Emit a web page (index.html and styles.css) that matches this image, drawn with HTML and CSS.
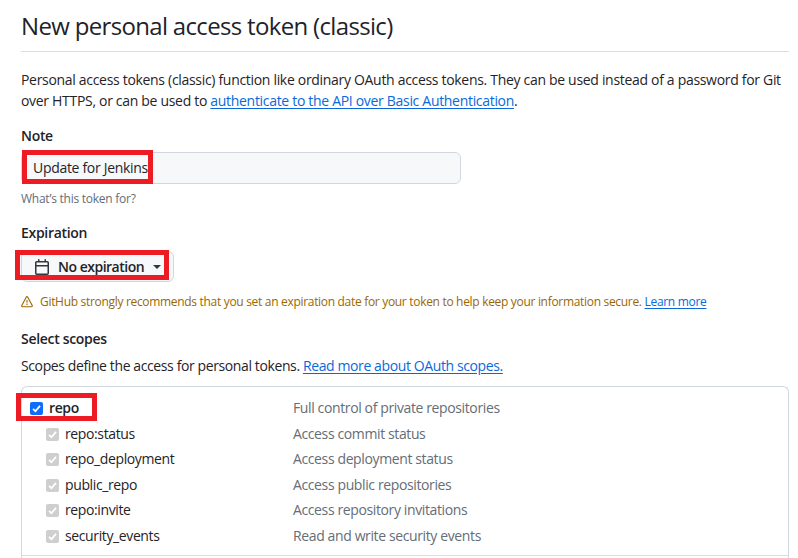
FILE: index.html
```html
<!DOCTYPE html>
<html lang="en">
<head>
<meta charset="utf-8">
<title>New personal access token (classic)</title>
<link rel="stylesheet" href="styles.css">
</head>
<body>
<main class="page">
  <header class="head"><h1>New personal access token (classic)</h1></header>
  <p class="intro">Personal access tokens (classic) function like ordinary OAuth access tokens. They can be used instead of a password for Git over HTTPS, or can be used to <a href="#">authenticate to the API over Basic Authentication</a>.</p>

  <section class="field note-field">
    <div class="label">Note</div>
    <div class="input-wrap">
      <div class="input">Update for Jenkins</div>
      <span class="mark mark-note"></span>
    </div>
    <div class="hint">What’s this token for?</div>
  </section>

  <section class="field exp-field">
    <div class="label">Expiration</div>
    <div class="button-wrap">
      <div class="select">
        <svg class="cal" viewBox="0 0 16 16" width="16" height="16"><path d="M4.75 0a.75.75 0 0 1 .75.75V2h5V.75a.75.75 0 0 1 1.5 0V2h1.25c.966 0 1.75.784 1.75 1.75v10.5A1.75 1.75 0 0 1 13.25 16H2.75A1.75 1.75 0 0 1 1 14.25V3.75C1 2.784 1.784 2 2.75 2H4V.75A.75.75 0 0 1 4.75 0ZM2.5 7.5v6.75c0 .138.112.25.25.25h10.5a.25.25 0 0 0 .25-.25V7.5Zm10.75-4H2.75a.25.25 0 0 0-.25.25V6h11V3.75a.25.25 0 0 0-.25-.25Z"/></svg>
        <span class="select-text">No expiration</span>
        <span class="caret"></span>
      </div>
      <span class="mark mark-exp"></span>
    </div>
    <div class="warn">
      <svg viewBox="0 0 16 16" width="12" height="12"><path d="M6.457 1.047c.659-1.234 2.427-1.234 3.086 0l6.082 11.378A1.75 1.75 0 0 1 14.082 15H1.918a1.75 1.75 0 0 1-1.543-2.575Zm1.763.707a.25.25 0 0 0-.44 0L1.698 13.132a.25.25 0 0 0 .22.368h12.164a.25.25 0 0 0 .22-.368Zm.53 3.996v2.5a.75.75 0 0 1-1.5 0v-2.5a.75.75 0 0 1 1.5 0ZM9 11a1 1 0 1 1-2 0 1 1 0 0 1 2 0Z"/></svg>
      <span>GitHub strongly recommends that you set an expiration date for your token to help keep your information secure. <a href="#">Learn more</a></span>
    </div>
  </section>

  <section class="field scopes">
    <div class="label">Select scopes</div>
    <p class="scope-intro">Scopes define the access for personal tokens. <a href="#">Read more about OAuth scopes.</a></p>
    <div class="table">
      <div class="row parent">
        <span class="check on"><svg viewBox="0 0 12 12" width="11" height="11"><path d="M2.2 6.4 4.8 9 9.8 3.2"/></svg></span>
        <span class="name">repo</span>
        <span class="desc">Full control of private repositories</span>
        <span class="mark mark-repo"></span>
      </div>
      <div class="row child"><span class="check off"><svg viewBox="0 0 12 12" width="11" height="11"><path d="M2.2 6.4 4.8 9 9.8 3.2"/></svg></span><span class="name">repo:status</span><span class="desc">Access commit status</span></div>
      <div class="row child"><span class="check off"><svg viewBox="0 0 12 12" width="11" height="11"><path d="M2.2 6.4 4.8 9 9.8 3.2"/></svg></span><span class="name">repo_deployment</span><span class="desc">Access deployment status</span></div>
      <div class="row child"><span class="check off"><svg viewBox="0 0 12 12" width="11" height="11"><path d="M2.2 6.4 4.8 9 9.8 3.2"/></svg></span><span class="name">public_repo</span><span class="desc">Access public repositories</span></div>
      <div class="row child"><span class="check off"><svg viewBox="0 0 12 12" width="11" height="11"><path d="M2.2 6.4 4.8 9 9.8 3.2"/></svg></span><span class="name">repo:invite</span><span class="desc">Access repository invitations</span></div>
      <div class="row child"><span class="check off"><svg viewBox="0 0 12 12" width="11" height="11"><path d="M2.2 6.4 4.8 9 9.8 3.2"/></svg></span><span class="name">security_events</span><span class="desc">Read and write security events</span></div>
      <div class="divider"></div>
    </div>
  </section>
</main>
</body>
</html>
```
FILE: styles.css
```css
* { box-sizing: border-box; }
html, body { height: 100%; overflow: hidden; }
body {
  margin: 0;
  background: #fff;
  color: #1f2328;
  font-family: "Open Sans", "Noto Sans", "Liberation Sans", sans-serif;
  font-size: 14px;
  letter-spacing: -0.31px;
}
a { color: #0969da; text-decoration: underline; text-underline-offset: 2px; }
.page { width: 768px; margin-left: 21px; }
.head { height: 52px; border-bottom: 1px solid #d8dee4; padding-top: 8px; }
h1 { margin: 0; font-size: 24px; font-weight: 400; line-height: 36px; letter-spacing: -0.67px; }
.intro { margin: 17px 0 0; line-height: 21px; }
.field { position: relative; }
.note-field { margin-top: 14px; }
.label { font-weight: 600; line-height: 21px; }
.input-wrap { position: relative; margin-top: 6px; width: 440px; }
.input {
  height: 32px; padding: 0 12px 2px 11px;
  display: flex; align-items: center;
  background: #f6f8fa;
  border: 1px solid #d0d7de;
  border-radius: 6px;
}
.hint { margin-top: 6px; font-size: 12px; line-height: 18px; color: #656d76; letter-spacing: -0.25px; }
.exp-field { margin-top: 14px; }
.button-wrap { position: relative; margin-top: 8px; width: 153px; }
.select {
  height: 31px; padding-left: 12px;
  display: flex; align-items: center;
  background: #f6f8fa;
  border: 1px solid #d0d7de;
  border-radius: 6px;
}
.cal { fill: #31363c; flex: none; }
.select-text { margin-left: 8px; font-weight: 600; letter-spacing: -0.5px; }
.caret {
  margin-left: 9px; width: 0; height: 0;
  border-style: solid; border-width: 4px 4px 0; border-color: #31363c transparent transparent;
}
.warn {
  margin-top: 11px; display: flex; align-items: center; gap: 7px;
  font-size: 12px; line-height: 18px; color: #9a6700; letter-spacing: -0.31px;
}
.warn svg { fill: #9a6700; flex: none; }
.scopes { margin-top: 17px; }
.scope-intro { margin: 6px 0 0; line-height: 21px; letter-spacing: -0.39px; }
.table {
  margin-top: 10px; height: 172px;
  border: 1px solid #d0d7de; border-bottom: 0; border-radius: 6px 6px 0 0;
  padding-top: 9px;
}
.row { position: relative; display: flex; align-items: center; height: 25.5px; letter-spacing: -0.38px; }
.parent { padding-left: 8px; }
.child { padding-left: 24px; }
.name, .desc { margin-bottom: 2px; }
.parent .name { font-weight: 600; margin-left: 6px; width: 244px; }
.child .name { margin-left: 6px; width: 228px; }
.desc { color: #656d76; }
.check {
  width: 13px; height: 13px; border-radius: 2px; flex: none;
  display: flex; align-items: center; justify-content: center;
}
.check svg { fill: none; stroke: #fff; stroke-width: 2; }
.on { background: #0d6efd; }
.off { background: #cfcfcf; }
.divider { margin-top: 6px; border-top: 1px solid #d8dee4; }
.mark { position: absolute; border: 5px solid #ed1c24; pointer-events: none; }
.mark-note { left: 1px; top: -2px; width: 131px; height: 34px; }
.mark-exp { left: -6px; top: -1px; width: 154px; height: 30px; }
.mark-repo { left: -6px; top: -3px; width: 81px; height: 28px; }
```
